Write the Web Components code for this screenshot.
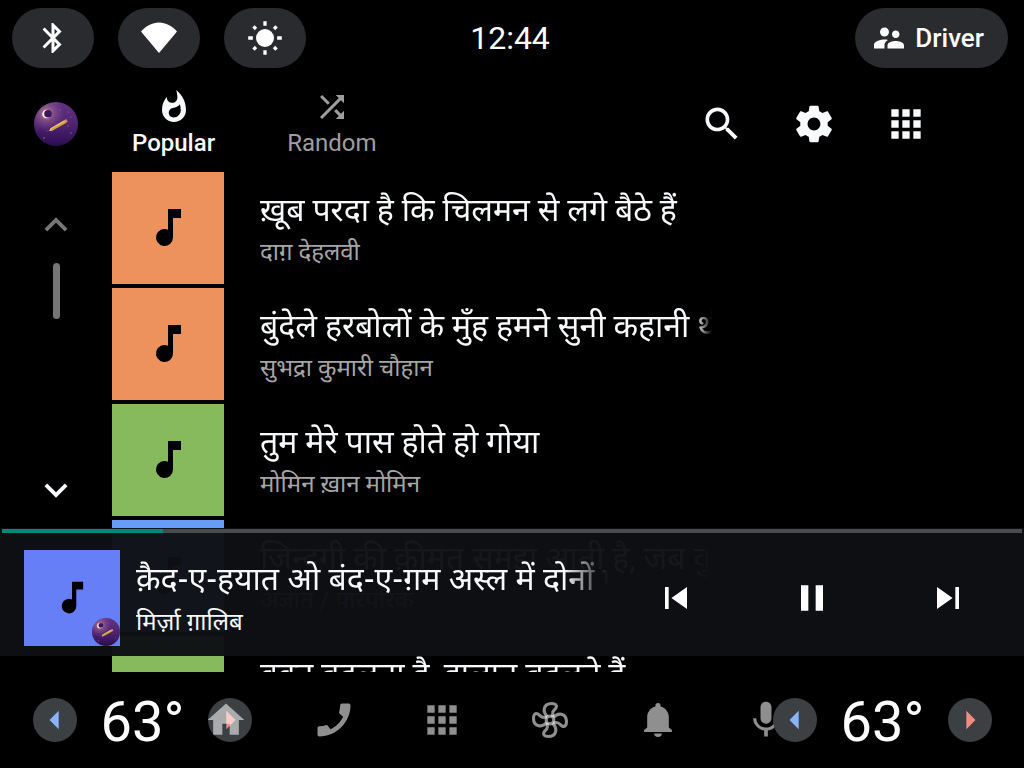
<!DOCTYPE html>
<html lang="hi">
<head>
<meta charset="utf-8">
<meta name="viewport" content="width=device-width, initial-scale=1">
<title>Media Center</title>
<style>
    body {
        margin: 0;
        background: #000;
        color: #f8f9fa;
        font-family: Roboto, "Noto Sans Devanagari", "Noto Sans", sans-serif;
    }
</style>
</head>
<body>
<car-screen></car-screen>

<script>
const ICONS = {
    bluetooth: '<path d="M17.71 7.71L12 2h-1v7.59L6.41 5 5 6.41 10.59 12 5 17.59 6.41 19 11 14.41V22h1l5.71-5.71-4.3-4.29 4.3-4.29zM13 5.83l1.88 1.88L13 9.59V5.83zm1.88 10.46L13 18.17v-3.76l1.88 1.88z"/>',
    wifi: '<path d="M12 22L0 7.7C3.3 4 7.4 1.7 12 1.7s8.7 2.3 12 6z"/>',
    sun: '<circle cx="12" cy="12" r="6"/><path stroke="currentColor" stroke-width="2.2" d="M12 .8v3.1M12 20.1v3.1M.8 12h3.1M20.1 12h3.1M4.3 4.3L6 6M18 18l1.7 1.7M4.3 19.7L6 18M18 6l1.7-1.7"/>',
    users: '<path d="M16.5 12c1.38 0 2.49-1.12 2.49-2.5S17.88 7 16.5 7 14 8.12 14 9.5s1.12 2.5 2.5 2.5zM9 11c1.66 0 2.99-1.34 2.99-3S10.66 5 9 5 6 6.34 6 8s1.34 3 3 3zm7.5 3c-1.83 0-5.5.92-5.5 2.75V19h11v-2.25c0-1.83-3.67-2.75-5.5-2.75zM9 13c-2.33 0-7 1.17-7 3.5V19h7v-2.25c0-.85.33-2.34 2.37-3.47C10.5 13.1 9.66 13 9 13z"/>',
    flame: '<path d="M13.5.67s.74 2.65.74 4.8c0 2.06-1.35 3.73-3.41 3.73-2.07 0-3.63-1.67-3.63-3.73l.03-.36C5.21 7.51 4 10.62 4 14c0 4.42 3.58 8 8 8s8-3.58 8-8C20 8.61 17.41 3.8 13.5.67zM11.71 19c-1.78 0-3.22-1.4-3.22-3.14 0-1.62 1.05-2.76 2.81-3.12 1.77-.36 3.6-1.21 4.62-2.58.39 1.29.59 2.65.59 4.04 0 2.65-2.15 4.8-4.8 4.8z"/>',
    shuffle: '<path d="M10.59 9.17L5.41 4 4 5.41l5.17 5.17 1.42-1.41zM14.5 4l2.04 2.04L4 18.59 5.41 20 17.96 7.46 20 9.5V4h-5.5zm.33 9.41l-1.41 1.41 3.13 3.13L14.5 20H20v-5.5l-2.04 2.04-3.13-3.13z"/>',
    search: '<path d="M15.5 14h-.79l-.28-.27C15.41 12.59 16 11.11 16 9.5 16 5.91 13.09 3 9.5 3S3 5.91 3 9.5 5.91 16 9.5 16c1.61 0 3.09-.59 4.23-1.57l.27.28v.79l5 4.99L20.49 19l-4.99-5zm-6 0C7.01 14 5 11.99 5 9.5S7.01 5 9.5 5 14 7.01 14 9.5 11.99 14 9.5 14z"/>',
    settings: '<path d="M19.43 12.98c.04-.32.07-.64.07-.98s-.03-.66-.07-.98l2.11-1.65c.19-.15.24-.42.12-.64l-2-3.46c-.12-.22-.39-.3-.61-.22l-2.49 1c-.52-.4-1.08-.73-1.69-.98l-.38-2.65C14.46 2.18 14.25 2 14 2h-4c-.25 0-.46.18-.49.42l-.38 2.65c-.61.25-1.17.59-1.69.98l-2.49-1c-.23-.09-.49 0-.61.22l-2 3.46c-.13.22-.07.49.12.64l2.11 1.65c-.04.32-.07.65-.07.98s.03.66.07.98l-2.11 1.65c-.19.15-.24.42-.12.64l2 3.46c.12.22.39.3.61.22l2.49-1c.52.4 1.08.73 1.69.98l.38 2.65c.03.24.24.42.49.42h4c.25 0 .46-.18.49-.42l.38-2.65c.61-.25 1.17-.59 1.69-.98l2.49 1c.23.09.49 0 .61-.22l2-3.46c.12-.22.07-.49-.12-.64l-2.11-1.65zM12 15.5c-1.93 0-3.5-1.57-3.5-3.5s1.57-3.5 3.5-3.5 3.5 1.57 3.5 3.5-1.57 3.5-3.5 3.5z"/>',
    apps: '<path d="M4 8h4V4H4v4zm6 12h4v-4h-4v4zm-6 0h4v-4H4v4zm0-6h4v-4H4v4zm6 0h4v-4h-4v4zm6-10v4h4V4h-4zm-6 4h4V4h-4v4zm6 6h4v-4h-4v4zm0 6h4v-4h-4v4z"/>',
    up: '<path d="M12 8l-6 6 1.41 1.41L12 10.83l4.59 4.58L18 14z"/>',
    down: '<path d="M16.59 8.59L12 13.17 7.41 8.59 6 10l6 6 6-6z"/>',
    prev: '<path d="M6 6h2v12H6zm3.5 6l8.5 6V6z"/>',
    pause: '<path d="M6 19h4V5H6v14zm8-14v14h4V5h-4z"/>',
    next: '<path d="M6 18l8.5-6L6 6v12zM16 6v12h2V6h-2z"/>',
    left: '<path d="M14 7l-5 5 5 5V7z"/>',
    right: '<path d="M10 17l5-5-5-5v10z"/>',
    home: '<path d="M10 20v-6h4v6h5v-8h3L12 3 2 12h3v8z"/>',
    phone: '<path transform="matrix(-1 0 0 1 24 0)" d="M20.01 15.38c-1.23 0-2.42-.2-3.53-.56-.35-.12-.74-.03-1.01.24l-1.57 1.97c-2.83-1.35-5.48-3.9-6.89-6.83l1.95-1.66c.27-.28.35-.67.24-1.02-.37-1.11-.56-2.3-.56-3.53 0-.54-.45-.99-.99-.99H4.19C3.65 3 3 3.24 3 3.99 3 13.28 10.73 21 20.01 21c.71 0 .99-.63.99-1.18v-3.45c0-.54-.45-.99-.99-.99z"/>',
    fan: (() => {
        const blade = 'M10.6 10.2C9.2 8.8 8.6 7.2 8.9 5.8c.4-1.9 2.2-2.8 4.1-2.8 2.1 0 2.9 1.1 2.3 2.3-.5 1-1.7 1.5-1.8 2.7-.1.8 0 1.6.1 2.2';
        return '<g fill="none" stroke="currentColor" stroke-width="1.7"><circle cx="12" cy="12" r="2.1"/>' +
            [0, 90, 180, 270].map(a => `<path transform="rotate(${a} 12 12)" d="${blade}"/>`).join('') + '</g>';
    })(),
    bell: '<path d="M12 2.7a1.4 1.4 0 0 1 1.4 1.4v.5c2.7.7 4.5 3.1 4.5 5.8v5.7l1.7 1.4v1H4.4v-1l1.7-1.4v-5.7c0-2.7 1.8-5.1 4.5-5.8v-.5A1.4 1.4 0 0 1 12 2.7zM9.9 19.4h4.2a2.1 1.9 0 0 1-4.2 0z"/>',
    mic: '<path d="M12 14c1.66 0 2.99-1.34 2.99-3L15 5c0-1.66-1.34-3-3-3S9 3.34 9 5v6c0 1.66 1.34 3 3 3zm5.3-3c0 3-2.54 5.1-5.3 5.1S6.7 14 6.7 11H5c0 3.41 2.72 6.23 6 6.72V21h2v-3.28c3.28-.48 6-3.3 6-6.72h-1.7z"/>'
};

const TRACKS = [
    { title: 'ख़ूब परदा है कि चिलमन से लगे बैठे हैं', artist: 'दाग़ देहलवी', color: '#ed925c' },
    { title: 'बुंदेले हरबोलों के मुँह हमने सुनी कहानी थी', artist: 'सुभद्रा कुमारी चौहान', color: '#ed925c' },
    { title: 'तुम मेरे पास होते हो गोया', artist: 'मोमिन ख़ान मोमिन', color: '#87b95d' },
    { title: 'ज़िन्दगी की क़ीमत समझ आती है, जब वुजूद', artist: 'अज्ञात / पारंपरिक', color: '#669df6' },
    { title: 'वक्त बदलता है, हालात बदलते हैं', artist: 'अज्ञात', color: '#87b95d' }
];

// Styles shared by every element that draws a button
const BUTTON_CSS = `
    button {
        display: flex;
        align-items: center;
        justify-content: center;
        margin: 0;
        padding: 0;
        border: none;
        background: none;
        color: inherit;
        font: inherit;
        cursor: pointer;
    }
`;

class CarIcon extends HTMLElement {
    constructor() {
        super();
        this.attachShadow({ mode: 'open' });
    }

    connectedCallback() {
        this.shadowRoot.innerHTML = `
            <style>
                :host {
                    display: block;
                    width: var(--icon-size, 44px);
                    height: var(--icon-size, 44px);
                    flex: none;
                }
                svg { display: block; width: 100%; height: 100%; fill: currentColor; }
            </style>
            <svg viewBox="0 0 24 24" aria-hidden="true">${ICONS[this.getAttribute('name')]}</svg>
        `;
    }
}
customElements.define('car-icon', CarIcon);

// Round logo of the media source: night sky, eclipse and pencil
class SourceLogo extends HTMLElement {
    constructor() {
        super();
        this.attachShadow({ mode: 'open' });
        this.shadowRoot.innerHTML = `
            <style>
                :host { display: block; width: 44px; height: 44px; flex: none; }
                svg { display: block; width: 100%; height: 100%; }
            </style>
            <svg viewBox="0 0 44 44" role="img" aria-label="Media source">
                <defs>
                    <linearGradient id="sky" x1="0" y1="0" x2="0" y2="1">
                        <stop offset="0" stop-color="#643184"/>
                        <stop offset=".5" stop-color="#4f2472"/>
                        <stop offset="1" stop-color="#2b0d50"/>
                    </linearGradient>
                    <radialGradient id="glow" cx=".28" cy=".26" r=".42">
                        <stop offset="0" stop-color="#d6a49a" stop-opacity=".85"/>
                        <stop offset=".4" stop-color="#a8718f" stop-opacity=".5"/>
                        <stop offset="1" stop-color="#7a4a90" stop-opacity="0"/>
                    </radialGradient>
                </defs>
                <circle cx="22" cy="22" r="22" fill="url(#sky)"/>
                <circle cx="22" cy="22" r="22" fill="url(#glow)"/>
                <circle cx="12.5" cy="12" r="4.3" fill="#fff3dc"/>
                <circle cx="14" cy="11.7" r="3.8" fill="#3a1560"/>
                <path d="M15 29l2-3.2 1.6 2.6z" fill="#f0d9a0"/>
                <path d="M16.6 26.2l13.8-8 1.7 2.7-13.9 7.8z" fill="#d3a23c"/>
                <path d="M16.6 26.2l13.8-8 .6 1-13.8 7.9z" fill="#ecc765"/>
                <path d="M30.2 18.3l2-1.2 1.5 2.6-2 1.2z" fill="#e08a72"/>
                <g fill="#a06ca8">
                    <circle cx="26" cy="8" r=".6"/><circle cx="34" cy="10" r=".6"/>
                    <circle cx="37" cy="15" r=".6"/><circle cx="34" cy="24" r=".6"/>
                    <circle cx="37" cy="31" r=".7"/><circle cx="10" cy="36" r=".8"/>
                    <circle cx="13" cy="29" r=".5"/><circle cx="18" cy="8" r=".5"/>
                </g>
            </svg>
        `;
    }
}
customElements.define('source-logo', SourceLogo);

class CoverArt extends HTMLElement {
    constructor() {
        super();
        this.attachShadow({ mode: 'open' });
        this.shadowRoot.innerHTML = `
            <style>
                :host { display: block; position: relative; width: 112px; height: 112px; flex: none; background: var(--cover); }
                svg { display: block; width: 100%; height: 100%; }
                ::slotted(*) { position: absolute; right: 0; bottom: 0; }
            </style>
            <svg viewBox="0 0 112 112" aria-hidden="true"><path d="M56 37h13v9h-8v19.5a8.5 8.5 0 1 1-5-7.75z"/></svg>
            <slot></slot>
        `;
    }
}
customElements.define('cover-art', CoverArt);

class StatusBar extends HTMLElement {
    constructor() {
        super();
        this.attachShadow({ mode: 'open' });
        this.shadowRoot.innerHTML = `
            <style>
                ${BUTTON_CSS}
                :host {
                    --icon-size: 36px;
                    display: grid;
                    grid-template-columns: 1fr auto 1fr;
                    align-items: center;
                    height: 76px;
                    padding: 0 16px 0 12px;
                    color: #fff;
                }
                .pills { display: flex; gap: 24px; }
                .pills button { width: 82px; }
                button { height: 60px; border-radius: 30px; background: #2a2b2f; }
                time { font-size: 32px; line-height: 40px; }
                .user {
                    justify-self: end;
                    gap: 8px;
                    padding: 0 24px 0 16px;
                    font-size: 26px;
                    font-weight: 500;
                }
            </style>
            <div class="pills">
                <button type="button" aria-label="Bluetooth"><car-icon name="bluetooth"></car-icon></button>
                <button type="button" aria-label="Wi-Fi"><car-icon name="wifi"></car-icon></button>
                <button type="button" aria-label="Brightness"><car-icon name="sun"></car-icon></button>
            </div>
            <time>12:44</time>
            <button type="button" class="user"><car-icon name="users"></car-icon>Driver</button>
        `;
    }
}
customElements.define('status-bar', StatusBar);

class MediaTab extends HTMLElement {
    constructor() {
        super();
        this.attachShadow({ mode: 'open' });
    }

    connectedCallback() {
        const selected = this.hasAttribute('selected');
        this.shadowRoot.innerHTML = `
            <style>
                ${BUTTON_CSS}
                :host { --icon-size: 36px; display: block; color: #9e9e9e; }
                :host([selected]) { color: #f8f9fa; font-weight: 500; }
                button { flex-direction: column; gap: 4px; font-size: 24px; line-height: 28px; }
            </style>
            <button type="button" role="tab" aria-selected="${selected}">
                <car-icon name="${this.getAttribute('icon')}"></car-icon>
                <slot></slot>
            </button>
        `;
    }
}
customElements.define('media-tab', MediaTab);

class MediaHeader extends HTMLElement {
    constructor() {
        super();
        this.attachShadow({ mode: 'open' });
        this.shadowRoot.innerHTML = `
            <style>
                ${BUTTON_CSS}
                :host { display: flex; align-items: center; height: 96px; }
                .source { display: flex; justify-content: center; width: 112px; }
                .tabs { display: flex; flex: 1; gap: 72px; padding: 0 0 2px 20px; }
                .actions { display: flex; gap: 48px; padding-right: 96px; }
            </style>
            <div class="source"><source-logo></source-logo></div>
            <div class="tabs" role="tablist">
                <media-tab icon="flame" selected>Popular</media-tab>
                <media-tab icon="shuffle">Random</media-tab>
            </div>
            <div class="actions">
                <button type="button" aria-label="Search"><car-icon name="search"></car-icon></button>
                <button type="button" aria-label="Settings"><car-icon name="settings"></car-icon></button>
                <button type="button" aria-label="Apps"><car-icon name="apps"></car-icon></button>
            </div>
        `;
    }
}
customElements.define('media-header', MediaHeader);

class TrackText extends HTMLElement {
    constructor() {
        super();
        this.attachShadow({ mode: 'open' });
        this.shadowRoot.innerHTML = `
            <style>
                :host { display: block; flex: 1; min-width: 0; padding-top: 2px; }
                div { overflow: hidden; white-space: nowrap; }
                .title {
                    font-size: 32px;
                    line-height: 44px;
                    -webkit-mask-image: linear-gradient(to left, transparent, #000 var(--fade, 16px));
                    mask-image: linear-gradient(to left, transparent, #000 var(--fade, 16px));
                }
                .artist {
                    padding-top: 2px;
                    color: var(--artist-color, #a5a5a5);
                    font-size: 24px;
                    line-height: 36px;
                }
            </style>
            <div class="title"><slot name="title"></slot></div>
            <div class="artist"><slot name="artist"></slot></div>
        `;
    }
}
customElements.define('track-text', TrackText);

class TrackList extends HTMLElement {
    constructor() {
        super();
        this.attachShadow({ mode: 'open' });
        this._tracks = [];
    }

    set tracks(value) {
        this._tracks = value;
        this.render();
    }

    connectedCallback() {
        this.render();
    }

    render() {
        this.shadowRoot.innerHTML = `
            <style>
                ${BUTTON_CSS}
                :host { display: flex; height: 100%; }
                .scroll {
                    --icon-size: 46px;
                    display: flex;
                    flex-direction: column;
                    align-items: center;
                    box-sizing: border-box;
                    width: 112px;
                    padding: 30px 0 159px;
                }
                .scroll button:disabled { color: #757575; }
                .track { flex: 1; padding: 15px 0; }
                .thumb { width: 7px; height: 56px; border-radius: 4px; background: #757575; }
                ul {
                    display: flex;
                    flex: 1;
                    flex-direction: column;
                    gap: 4px;
                    min-width: 0;
                    margin: 0;
                    padding: 0;
                    list-style: none;
                }
                li { display: flex; align-items: center; gap: 36px; padding-right: 312px; }
            </style>
            <div class="scroll">
                <button type="button" aria-label="Scroll up" disabled><car-icon name="up"></car-icon></button>
                <div class="track"><div class="thumb"></div></div>
                <button type="button" aria-label="Scroll down"><car-icon name="down"></car-icon></button>
            </div>
            <ul>
                ${this._tracks.map(t => `
                    <li>
                        <cover-art style="--cover: ${t.color}"></cover-art>
                        <track-text>
                            <span slot="title">${t.title}</span>
                            <span slot="artist">${t.artist}</span>
                        </track-text>
                    </li>
                `).join('')}
            </ul>
        `;
    }
}
customElements.define('track-list', TrackList);

class MiniPlayer extends HTMLElement {
    constructor() {
        super();
        this.attachShadow({ mode: 'open' });
        this.shadowRoot.innerHTML = `
            <style>
                ${BUTTON_CSS}
                :host { display: block; padding-top: 1px; background: rgba(14, 16, 20, 0.97); }
                progress {
                    display: block;
                    width: calc(100% - 4px);
                    height: 4px;
                    margin: 0 2px;
                    border: none;
                    appearance: none;
                    -webkit-appearance: none;
                    background: #4a4b4f;
                }
                progress::-webkit-progress-bar { background: #4a4b4f; }
                progress::-webkit-progress-value { background: #00897b; }
                progress::-moz-progress-bar { background: #00897b; }
                .row { display: flex; align-items: center; padding: 17px 8px 10px 24px; }
                cover-art { --cover: #667ff6; width: 96px; height: 96px; }
                source-logo { width: 28px; height: 28px; }
                track-text {
                    --artist-color: #f8f9fa;
                    --fade: 44px;
                    margin-left: 16px;
                    padding-top: 5px;
                    font-family: "Noto Sans Devanagari", "Noto Sans", sans-serif;
                }
                .controls { display: flex; }
                .controls button { width: 136px; height: 96px; color: #fff; }
            </style>
            <progress max="1000" value="158" aria-label="Playback position"></progress>
            <div class="row">
                <cover-art><source-logo></source-logo></cover-art>
                <track-text>
                    <span slot="title">क़ैद-ए-हयात ओ बंद-ए-ग़म अस्ल में दोनों एक हैं</span>
                    <span slot="artist">मिर्ज़ा ग़ालिब</span>
                </track-text>
                <div class="controls">
                    <button type="button" aria-label="Previous"><car-icon name="prev"></car-icon></button>
                    <button type="button" aria-label="Pause"><car-icon name="pause"></car-icon></button>
                    <button type="button" aria-label="Next"><car-icon name="next"></car-icon></button>
                </div>
            </div>
        `;
    }
}
customElements.define('mini-player', MiniPlayer);

class TempControl extends HTMLElement {
    constructor() {
        super();
        this.attachShadow({ mode: 'open' });
        this.shadowRoot.innerHTML = `
            <style>
                ${BUTTON_CSS}
                :host { display: flex; align-items: center; color: #fff; }
                button { border-radius: 50%; background: #3c4043; }
                .down { color: #8ab4f8; }
                .up { color: #f28b82; }
                output {
                    width: 131px;
                    padding-top: 4px;
                    font-size: 56px;
                    line-height: 64px;
                    text-align: center;
                }
            </style>
            <button type="button" class="down" aria-label="Cooler"><car-icon name="left"></car-icon></button>
            <output><slot></slot></output>
            <button type="button" class="up" aria-label="Warmer"><car-icon name="right"></car-icon></button>
        `;
    }
}
customElements.define('temp-control', TempControl);

class SystemBar extends HTMLElement {
    constructor() {
        super();
        this.attachShadow({ mode: 'open' });
        // The shortcuts and both temperature controls share one grid cell, so they may overlap
        this.shadowRoot.innerHTML = `
            <style>
                ${BUTTON_CSS}
                :host { display: grid; align-items: center; height: 96px; padding: 0 32px 0 33px; }
                temp-control, nav { grid-area: 1 / 1; }
                temp-control { justify-self: start; }
                temp-control.passenger { justify-self: end; }
                nav { display: flex; padding: 0 172px 0 139px; color: rgba(255, 255, 255, 0.56); }
                nav button { flex: 1; height: 96px; }
            </style>
            <temp-control>63°</temp-control>
            <nav>
                <button type="button" aria-label="Home"><car-icon name="home"></car-icon></button>
                <button type="button" aria-label="Phone"><car-icon name="phone"></car-icon></button>
                <button type="button" aria-label="Apps"><car-icon name="apps"></car-icon></button>
                <button type="button" aria-label="Climate"><car-icon name="fan"></car-icon></button>
                <button type="button" aria-label="Notifications"><car-icon name="bell"></car-icon></button>
                <button type="button" aria-label="Assistant"><car-icon name="mic"></car-icon></button>
            </nav>
            <temp-control class="passenger">63°</temp-control>
        `;
    }
}
customElements.define('system-bar', SystemBar);

class CarScreen extends HTMLElement {
    constructor() {
        super();
        this.attachShadow({ mode: 'open' });
        this.shadowRoot.innerHTML = `
            <style>
                :host { display: flex; flex-direction: column; height: 100vh; overflow: hidden; }
                main { position: relative; flex: 1; min-height: 0; overflow: hidden; }
                mini-player { position: absolute; left: 0; right: 0; bottom: 16px; }
            </style>
            <status-bar></status-bar>
            <media-header></media-header>
            <main>
                <track-list></track-list>
                <mini-player></mini-player>
            </main>
            <system-bar></system-bar>
        `;
        this.shadowRoot.querySelector('track-list').tracks = TRACKS;
    }
}
customElements.define('car-screen', CarScreen);
</script>
</body>
</html>
